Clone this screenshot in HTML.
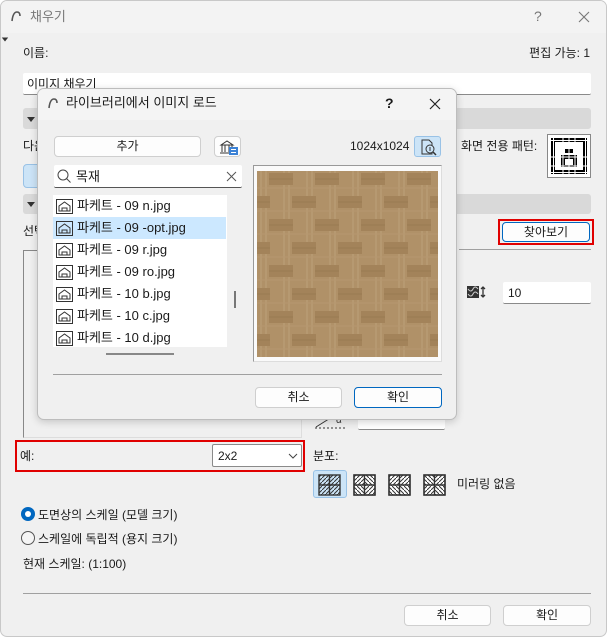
<!DOCTYPE html>
<html><head><meta charset="utf-8">
<style>
*{box-sizing:border-box;margin:0;padding:0}
body{width:607px;height:637px;background:#fff;font-family:"Liberation Sans","Noto Sans CJK KR",sans-serif;font-size:12px;color:#1a1a1a;position:relative;overflow:hidden}
.a{position:absolute}
.win{left:0;top:0;width:607px;height:637px;background:#f0f0f0;border:1px solid #c8c8c8;border-radius:7px;overflow:hidden}
.t{position:absolute;white-space:nowrap;line-height:14px}
.inp{position:absolute;background:#fff;border-bottom:1px solid #8a8a8a;border-radius:2px}
.btn{position:absolute;background:#fdfdfd;border:1px solid #cfcfcf;border-radius:4px;text-align:center;line-height:18px;font-size:12px}
.bar{position:absolute;background:#d9d9d9;border-radius:3px}
.tri{position:absolute;width:0;height:0;border-left:4px solid transparent;border-right:4px solid transparent;border-top:5px solid #333}
.item{position:absolute;left:0;width:173px;height:22px;line-height:22px;padding-left:24px;font-size:13px}
.item svg{position:absolute;left:3px;top:4px}
</style></head><body>
<div class="a win">
  <div class="a" style="left:0;top:0;width:607px;height:32px;background:#f3f3f3"></div>
  <svg class="a" style="left:9px;top:9px" width="12" height="12"><path d="M2 11 Q3 2 7 2 Q10 2 10 6" fill="none" stroke="#555" stroke-width="1.6"/></svg>
  <div class="t" style="left:29px;top:9px;font-size:13px;color:#777">채우기</div>
  <div class="t" style="left:533px;top:8px;font-size:14px;color:#777">?</div>
  <svg class="a" style="left:577px;top:10px" width="12" height="12"><path d="M1 1L11 11M11 1L1 11" stroke="#777" stroke-width="1.1"/></svg>
  <div class="tri" style="left:0;top:36px;border-top-color:#333;transform:scale(.8)"></div>

  <div class="t" style="left:22px;top:45px">이름:</div>
  <div class="t" style="right:16px;top:45px">편집 가능: 1</div>
  <div class="inp" style="left:22px;top:72px;width:568px;height:22px"><div class="t" style="left:4px;top:4px">이미지 채우기</div></div>

  <div class="bar" style="left:22px;top:107px;width:568px;height:21px"></div>
  <div class="tri" style="left:26px;top:116px"></div>
  <div class="t" style="left:22px;top:138px">다음</div>
  <div class="t" style="left:460px;top:138px">화면 전용 패턴:</div>
  <div class="a" style="left:546px;top:133px;width:44px;height:44px;background:#fff;border:1px solid #888">
    <svg width="42" height="42" viewBox="0 0 42 42">
      <g fill="#000">
        <path d="M3 3h36v4H3zM3 35h36v4H3zM3 3h4v36H3zM35 3h4v36h-4z"/>
        <path d="M13 20h16v4H13zM13 30h16v2H13zM13 20h4v12h-4zM25 20h4v12h-4zM17 14h8v4h-8z"/>
      </g>
      <g stroke="#fff" stroke-width="1">
        <path d="M0 5.5h42M0 37.5h42M0 22h42M0 31h42M5.5 0v42M37.5 0v42M15 0v42M21 0v42M27 0v42"/>
      </g>
    </svg>
  </div>
  <div class="a" style="left:22px;top:163px;width:30px;height:24px;background:#cce4f7;border:1px solid #99c2e6;border-radius:4px"></div>
  <div class="bar" style="left:22px;top:193px;width:568px;height:20px"></div>
  <div class="tri" style="left:26px;top:201px"></div>
  <div class="t" style="left:22px;top:223px">선택</div>

  <div class="a" style="left:497px;top:218px;width:96px;height:26px;border:2px solid #e00000"></div>
  <div class="btn" style="left:501px;top:221px;width:88px;height:20px;border-color:#0067c0">찾아보기</div>
  <div class="a" style="left:458px;top:248px;width:132px;height:1px;background:#a0a0a0"></div>
  <svg class="a" style="left:466px;top:285px" width="20" height="12"><rect x="0" y="0" width="12" height="12" fill="#333"/><path d="M1 3 Q4 7 6 3 T11 3M1 8 Q4 12 6 8 T11 8" stroke="#ccc" fill="none"/><path d="M16 1v10M14 3l2-2 2 2M14 9l2 2 2-2" stroke="#333" fill="none" stroke-width="1.3"/></svg>
  <div class="inp" style="left:502px;top:281px;width:88px;height:22px"><div class="t" style="left:5px;top:4px">10</div></div>

  <div class="a" style="left:22px;top:249px;width:279px;height:188px;border:1px solid #888;border-right-color:#ddd;border-bottom-color:#ddd"></div>
  <svg class="a" style="left:313px;top:412px" width="32" height="16"><path d="M2 14 L18 4" stroke="#333"/><path d="M1 15h30" stroke="#333" stroke-dasharray="2 2"/><text x="22" y="10" font-size="10" fill="#333">α</text></svg>
  <div class="inp" style="left:357px;top:412px;width:87px;height:17px"></div>

  <div class="a" style="left:14px;top:439px;width:290px;height:32px;border:2px solid #e00000"></div>
  <div class="t" style="left:19px;top:448px">예:</div>
  <div class="a" style="left:211px;top:443px;width:90px;height:23px;background:#fff;border:1px solid #8a8a8a;border-radius:2px">
    <div class="t" style="left:5px;top:4px">2x2</div>
    <svg class="a" style="left:75px;top:8px" width="10" height="6"><path d="M1 1l4 4 4-4" stroke="#444" fill="none"/></svg>
  </div>
  <div class="t" style="left:312px;top:448px">분포:</div>
  <div class="a" style="left:312px;top:469px;width:34px;height:28px;background:#cce4f7;border:1px solid #99c2e6;border-radius:3px"></div>
  <svg class="a" style="left:317px;top:473px" width="128" height="22">
    <defs>
      <pattern id="h1" width="4" height="4" patternUnits="userSpaceOnUse"><path d="M0 4L4 0" stroke="#333"/></pattern>
      <pattern id="h2" width="4" height="4" patternUnits="userSpaceOnUse"><path d="M0 0L4 4" stroke="#333"/></pattern>
    </defs>
    <g stroke="#333" stroke-width="1.4">
      <rect x="1" y="1" width="21" height="20" fill="url(#h1)"/><path d="M11.5 1v20M1 11h21"/>
      <g transform="translate(35,0)"><rect x="1" y="1" width="21" height="20" fill="#fff"/><rect x="1" y="1" width="10.5" height="10" fill="url(#h1)" stroke="none"/><rect x="11.5" y="1" width="10.5" height="10" fill="url(#h2)" stroke="none"/><rect x="1" y="11" width="10.5" height="10" fill="url(#h2)" stroke="none"/><rect x="11.5" y="11" width="10.5" height="10" fill="url(#h1)" stroke="none"/><rect x="1" y="1" width="21" height="20" fill="none"/><path d="M11.5 1v20M1 11h21"/></g>
      <g transform="translate(70,0)"><rect x="1" y="1" width="21" height="20" fill="#fff"/><rect x="1" y="1" width="10.5" height="10" fill="url(#h1)" stroke="none"/><rect x="11.5" y="1" width="10.5" height="10" fill="url(#h1)" stroke="none"/><rect x="1" y="11" width="10.5" height="10" fill="url(#h2)" stroke="none"/><rect x="11.5" y="11" width="10.5" height="10" fill="url(#h2)" stroke="none"/><rect x="1" y="1" width="21" height="20" fill="none"/><path d="M11.5 1v20M1 11h21"/></g>
      <g transform="translate(105,0)"><rect x="1" y="1" width="21" height="20" fill="#fff"/><rect x="1" y="1" width="10.5" height="10" fill="url(#h2)" stroke="none"/><rect x="11.5" y="1" width="10.5" height="10" fill="url(#h1)" stroke="none"/><rect x="1" y="11" width="10.5" height="10" fill="url(#h1)" stroke="none"/><rect x="11.5" y="11" width="10.5" height="10" fill="url(#h2)" stroke="none"/><rect x="1" y="1" width="21" height="20" fill="none"/><path d="M11.5 1v20M1 11h21"/></g>
    </g>
  </svg>
  <div class="t" style="left:456px;top:476px">미러링 없음</div>

  <div class="a" style="left:20px;top:506px;width:14px;height:14px;border-radius:50%;background:#0067c0"><div class="a" style="left:4px;top:4px;width:6px;height:6px;border-radius:50%;background:#fff"></div></div>
  <div class="t" style="left:37px;top:507px">도면상의 스케일 (모델 크기)</div>
  <div class="a" style="left:20px;top:530px;width:14px;height:14px;border-radius:50%;border:1px solid #555;background:#f5f5f5"></div>
  <div class="t" style="left:37px;top:531px">스케일에 독립적 (용지 크기)</div>
  <div class="t" style="left:22px;top:556px">현재 스케일: (1:100)</div>
  <div class="a" style="left:22px;top:592px;width:568px;height:1px;background:#a0a0a0"></div>
  <div class="btn" style="left:403px;top:604px;width:87px;height:21px">취소</div>
  <div class="btn" style="left:502px;top:604px;width:88px;height:21px">확인</div>
</div>

<!-- inner dialog -->
<div class="a" style="left:37px;top:88px;width:420px;height:332px;background:#f0f0f0;border:1px solid #bdbdbd;border-radius:7px;box-shadow:0 2px 8px rgba(0,0,0,.18);overflow:hidden">
  <div class="a" style="left:0;top:0;width:420px;height:31px;background:#f4f4f4"></div>
  <svg class="a" style="left:9px;top:8px" width="12" height="12"><path d="M2 11 Q3 2 7 2 Q10 2 10 6" fill="none" stroke="#555" stroke-width="1.6"/></svg>
  <div class="t" style="left:28px;top:7px;font-size:13px">라이브러리에서 이미지 로드</div>
  <div class="t" style="left:347px;top:7px;font-size:14px;font-weight:bold">?</div>
  <svg class="a" style="left:391px;top:9px" width="12" height="12"><path d="M1 1L11 11M11 1L1 11" stroke="#222" stroke-width="1.2"/></svg>

  <div class="btn" style="left:16px;top:47px;width:147px;height:21px">추가</div>
  <div class="btn" style="left:176px;top:47px;width:27px;height:21px">
    <svg class="a" style="left:4px;top:2px" width="20" height="17"><path d="M2 6L8 2 14 6zM3 6v7M6 6v7M10 6v7M13 6v7M1 14h14" stroke="#333" fill="none"/><rect x="10" y="8" width="9" height="8" fill="#3b82d6"/><path d="M12 10.5h5M12 13.5h5" stroke="#fff"/></svg>
  </div>
  <div class="t" style="left:312px;top:50px">1024x1024</div>
  <div class="a" style="left:376px;top:47px;width:27px;height:21px;background:#cce4f7;border:1px solid #99c2e6;border-radius:3px">
    <svg class="a" style="left:5px;top:2px" width="18" height="17"><path d="M2 1h7l3 3v11H2z" fill="none" stroke="#333"/><circle cx="10" cy="10" r="4" fill="#cce4f7" stroke="#333"/><path d="M13 13l3 3" stroke="#333" stroke-width="1.5"/><path d="M10 8v4" stroke="#333"/></svg>
  </div>

  <div class="inp" style="left:16px;top:76px;width:188px;height:23px;border-bottom-color:#555">
    <svg class="a" style="left:3px;top:4px" width="15" height="15"><circle cx="6" cy="6" r="5" fill="none" stroke="#444"/><path d="M9.5 9.5l4 4" stroke="#444"/></svg>
    <div class="t" style="left:22px;top:5px;font-size:13px">목재</div>
    <svg class="a" style="left:172px;top:6px" width="11" height="11"><path d="M1 1l9 9M10 1l-9 9" stroke="#555"/></svg>
  </div>

  <div class="a" style="left:15px;top:106px;width:174px;height:152px;background:#fff;overflow:hidden">
    <div class="item" style="top:0">파케트 - 09 n.jpg<svg width="17" height="15"><rect x=".5" y=".5" width="16" height="14" fill="none" stroke="#333"/><path d="M3 12V7l5.5-4 5.5 4v5zM6 12V9h5v3" fill="none" stroke="#333"/></svg></div>
    <div class="item" style="top:22px;background:#cce8ff">파케트 - 09 -opt.jpg<svg width="17" height="15"><rect x=".5" y=".5" width="16" height="14" fill="none" stroke="#333"/><path d="M3 12V7l5.5-4 5.5 4v5zM6 12V9h5v3" fill="none" stroke="#333"/></svg></div>
    <div class="item" style="top:44px">파케트 - 09 r.jpg<svg width="17" height="15"><rect x=".5" y=".5" width="16" height="14" fill="none" stroke="#333"/><path d="M3 12V7l5.5-4 5.5 4v5zM6 12V9h5v3" fill="none" stroke="#333"/></svg></div>
    <div class="item" style="top:66px">파케트 - 09 ro.jpg<svg width="17" height="15"><rect x=".5" y=".5" width="16" height="14" fill="none" stroke="#333"/><path d="M3 12V7l5.5-4 5.5 4v5zM6 12V9h5v3" fill="none" stroke="#333"/></svg></div>
    <div class="item" style="top:88px">파케트 - 10 b.jpg<svg width="17" height="15"><rect x=".5" y=".5" width="16" height="14" fill="none" stroke="#333"/><path d="M3 12V7l5.5-4 5.5 4v5zM6 12V9h5v3" fill="none" stroke="#333"/></svg></div>
    <div class="item" style="top:110px">파케트 - 10 c.jpg<svg width="17" height="15"><rect x=".5" y=".5" width="16" height="14" fill="none" stroke="#333"/><path d="M3 12V7l5.5-4 5.5 4v5zM6 12V9h5v3" fill="none" stroke="#333"/></svg></div>
    <div class="item" style="top:132px">파케트 - 10 d.jpg<svg width="17" height="15"><rect x=".5" y=".5" width="16" height="14" fill="none" stroke="#333"/><path d="M3 12V7l5.5-4 5.5 4v5zM6 12V9h5v3" fill="none" stroke="#333"/></svg></div>
  </div>
  <div class="a" style="left:196px;top:202px;width:2px;height:17px;background:#777"></div>
  <div class="a" style="left:68px;top:264px;width:68px;height:2px;background:#888"></div>

  <div class="a" style="left:215px;top:76px;width:189px;height:197px;background:#fafafa;border:1px solid #999;border-right-color:#ddd;border-bottom-color:#ddd">
    <svg class="a" style="left:3px;top:5px" width="181" height="186">
      <defs>
        <pattern id="w" width="46" height="46" patternUnits="userSpaceOnUse">
          <rect width="46" height="46" fill="#b09168"/>
          <path d="M4 0v46M9 0v46M27 0v46M32 0v46" stroke="#b99c74" stroke-width="1.5"/>
          <rect x="12" y="2" width="24" height="12" fill="#a3835a"/>
          <rect x="35" y="25" width="24" height="12" fill="#a3835a"/>
          <rect x="-11" y="25" width="24" height="12" fill="#a3835a"/>
          <path d="M12 8h24M-11 31h24M35 31h24" stroke="#9a7b52" stroke-width="1"/>
          <path d="M0 17h46M0 40h46" stroke="#b69870" stroke-width="1"/>
        </pattern>
      </defs>
      <rect width="181" height="186" fill="url(#w)"/>
    </svg>
  </div>
  <div class="a" style="left:15px;top:285px;width:389px;height:1px;background:#a0a0a0"></div>
  <div class="btn" style="left:217px;top:298px;width:87px;height:21px">취소</div>
  <div class="btn" style="left:316px;top:298px;width:88px;height:21px;border-color:#0067c0">확인</div>
</div>
</body></html>
